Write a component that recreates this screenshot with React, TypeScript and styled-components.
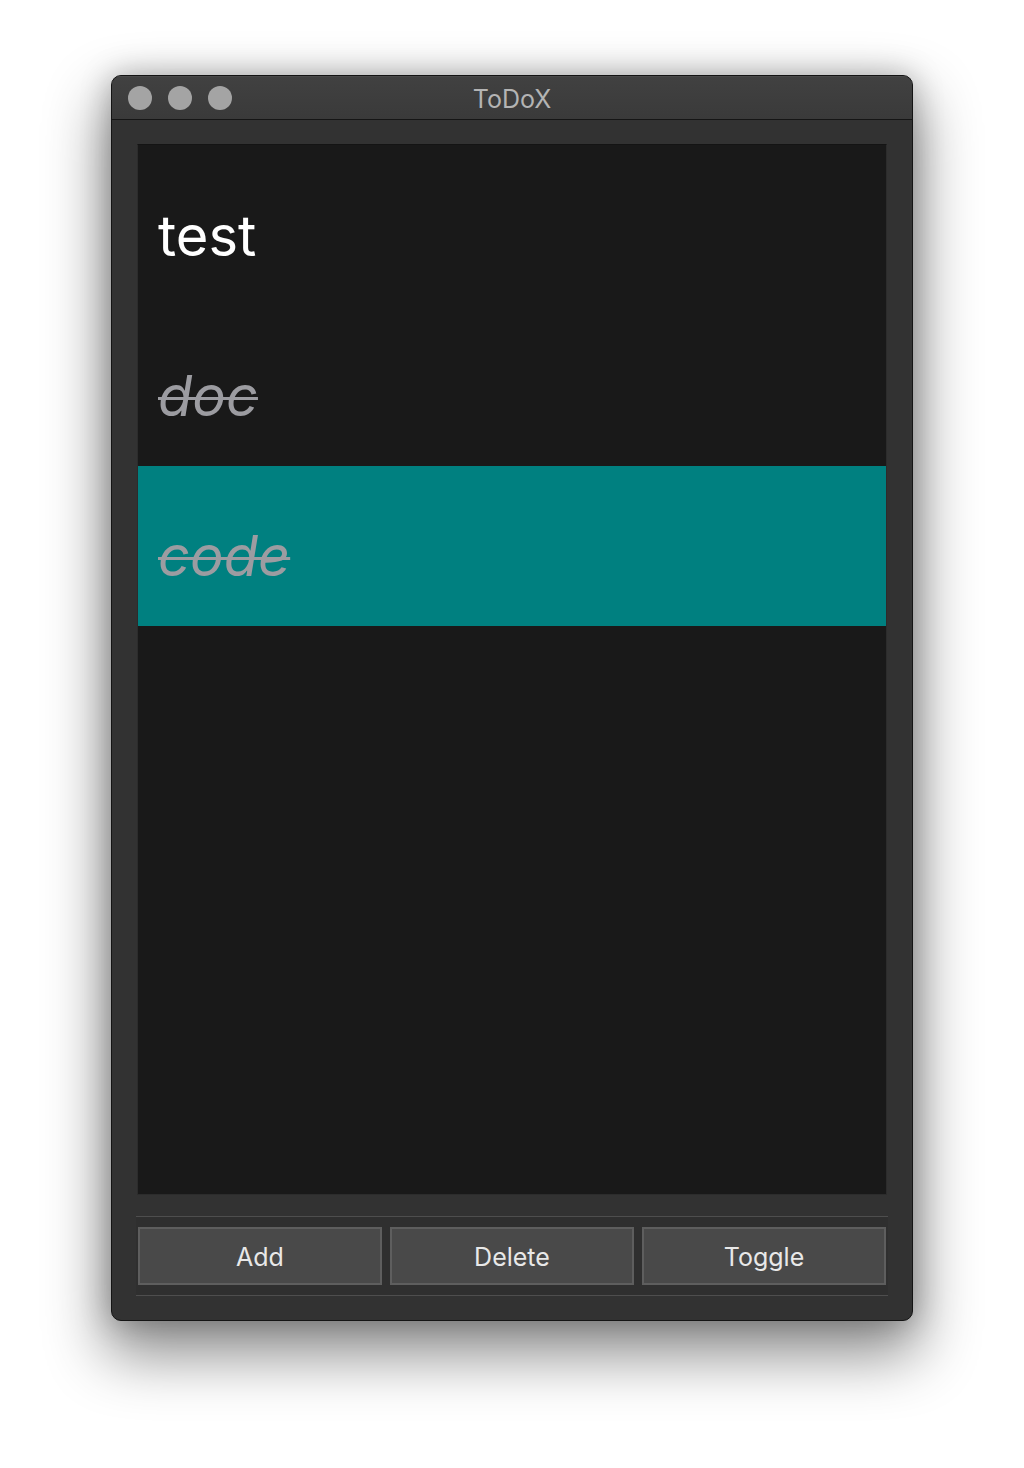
import React from "react";
import styled, { createGlobalStyle } from "styled-components";

const Global = createGlobalStyle`
  html, body { margin: 0; padding: 0; background: #ffffff; }
  body { font-family: Inter, "Liberation Sans", Arial, sans-serif; }
  * { box-sizing: border-box; }
`;

const Page = styled.div`
  width: 1024px;
  height: 1468px;
  padding: 75px 0 0 111px;
  background: #ffffff;
`;

const Window = styled.div`
  width: 802px;
  height: 1246px;
  display: flex;
  flex-direction: column;
  border: 1px solid #141414;
  border-radius: 10px;
  overflow: hidden;
  background: #323232;
  box-shadow: 0 28px 60px 6px rgba(0, 0, 0, 0.45), 0 0 30px rgba(0, 0, 0, 0.25);
`;

const TitleBar = styled.div`
  position: relative;
  height: 44px;
  flex: none;
  display: flex;
  align-items: center;
  justify-content: center;
  background: linear-gradient(#414141, #3a3a3a);
  border-bottom: 1px solid #151515;
  box-shadow: inset 0 1px 0 #4a4a4a;
`;

const Lights = styled.div`
  position: absolute;
  left: 16px;
  top: 10px;
  display: flex;
  gap: 16px;
`;

const Light = styled.span`
  width: 24px;
  height: 24px;
  border-radius: 50%;
  background: #a4a4a4;
`;

const Title = styled.div`
  color: #b4b4b4;
  font-size: 25px;
  font-family: Inter, "Liberation Sans", Arial, sans-serif;
  margin-top: 2px;
`;

const Body = styled.div`
  flex: 1;
  display: flex;
  flex-direction: column;
  padding: 24px 25px 24px 25px;
`;

const List = styled.div`
  height: 1051px;
  flex: none;
  display: flex;
  flex-direction: column;
  padding-top: 1px;
  background: #191919;
  border: 1px solid #2c2c2c;
  border-top-color: #141414;
`;

const Row = styled.div<{ $selected?: boolean }>`
  height: 160px;
  flex: none;
  display: flex;
  align-items: center;
  padding-left: 20px;
  background: ${(p) => (p.$selected ? "#008080" : "transparent")};
`;

const ItemText = styled.span<{ $done?: boolean }>`
  font-family: Inter, "Liberation Sans", Arial, sans-serif;
  font-size: 56px;
  line-height: 1;
  margin-top: 20px;
  color: ${(p) => (p.$done ? "#9c9ca1" : "#ffffff")};
  font-style: ${(p) => (p.$done ? "italic" : "normal")};
  text-decoration: ${(p) => (p.$done ? "line-through" : "none")};
  text-decoration-thickness: 3px;
`;

const Toolbar = styled.div`
  margin-top: 21px;
  margin-left: -1px;
  margin-right: -1px;
  padding: 10px 2px;
  display: grid;
  grid-template-columns: 1fr 1fr 1fr;
  gap: 8px;
  border-top: 1px solid #4e4e4e;
  border-bottom: 1px solid #4e4e4e;
  background: #2f2f2f;
`;

const Button = styled.button`
  height: 58px;
  background: #494949;
  border: 2px solid #5e5e5e;
  border-radius: 0;
  color: #e8e8e8;
  font-family: Inter, "Liberation Sans", Arial, sans-serif;
  font-size: 25px;
  padding: 2px 0 0;
  cursor: pointer;
`;

const items = [
  { text: "test", done: false, selected: false },
  { text: "doc", done: true, selected: false },
  { text: "code", done: true, selected: true },
];

export default function App() {
  return (
    <Page>
      <Global />
      <Window>
        <TitleBar>
          <Lights>
            <Light />
            <Light />
            <Light />
          </Lights>
          <Title>ToDoX</Title>
        </TitleBar>
        <Body>
          <List>
            {items.map((it) => (
              <Row key={it.text} $selected={it.selected}>
                <ItemText $done={it.done}>{it.text}</ItemText>
              </Row>
            ))}
          </List>
          <Toolbar>
            <Button>Add</Button>
            <Button>Delete</Button>
            <Button>Toggle</Button>
          </Toolbar>
        </Body>
      </Window>
    </Page>
  );
}
